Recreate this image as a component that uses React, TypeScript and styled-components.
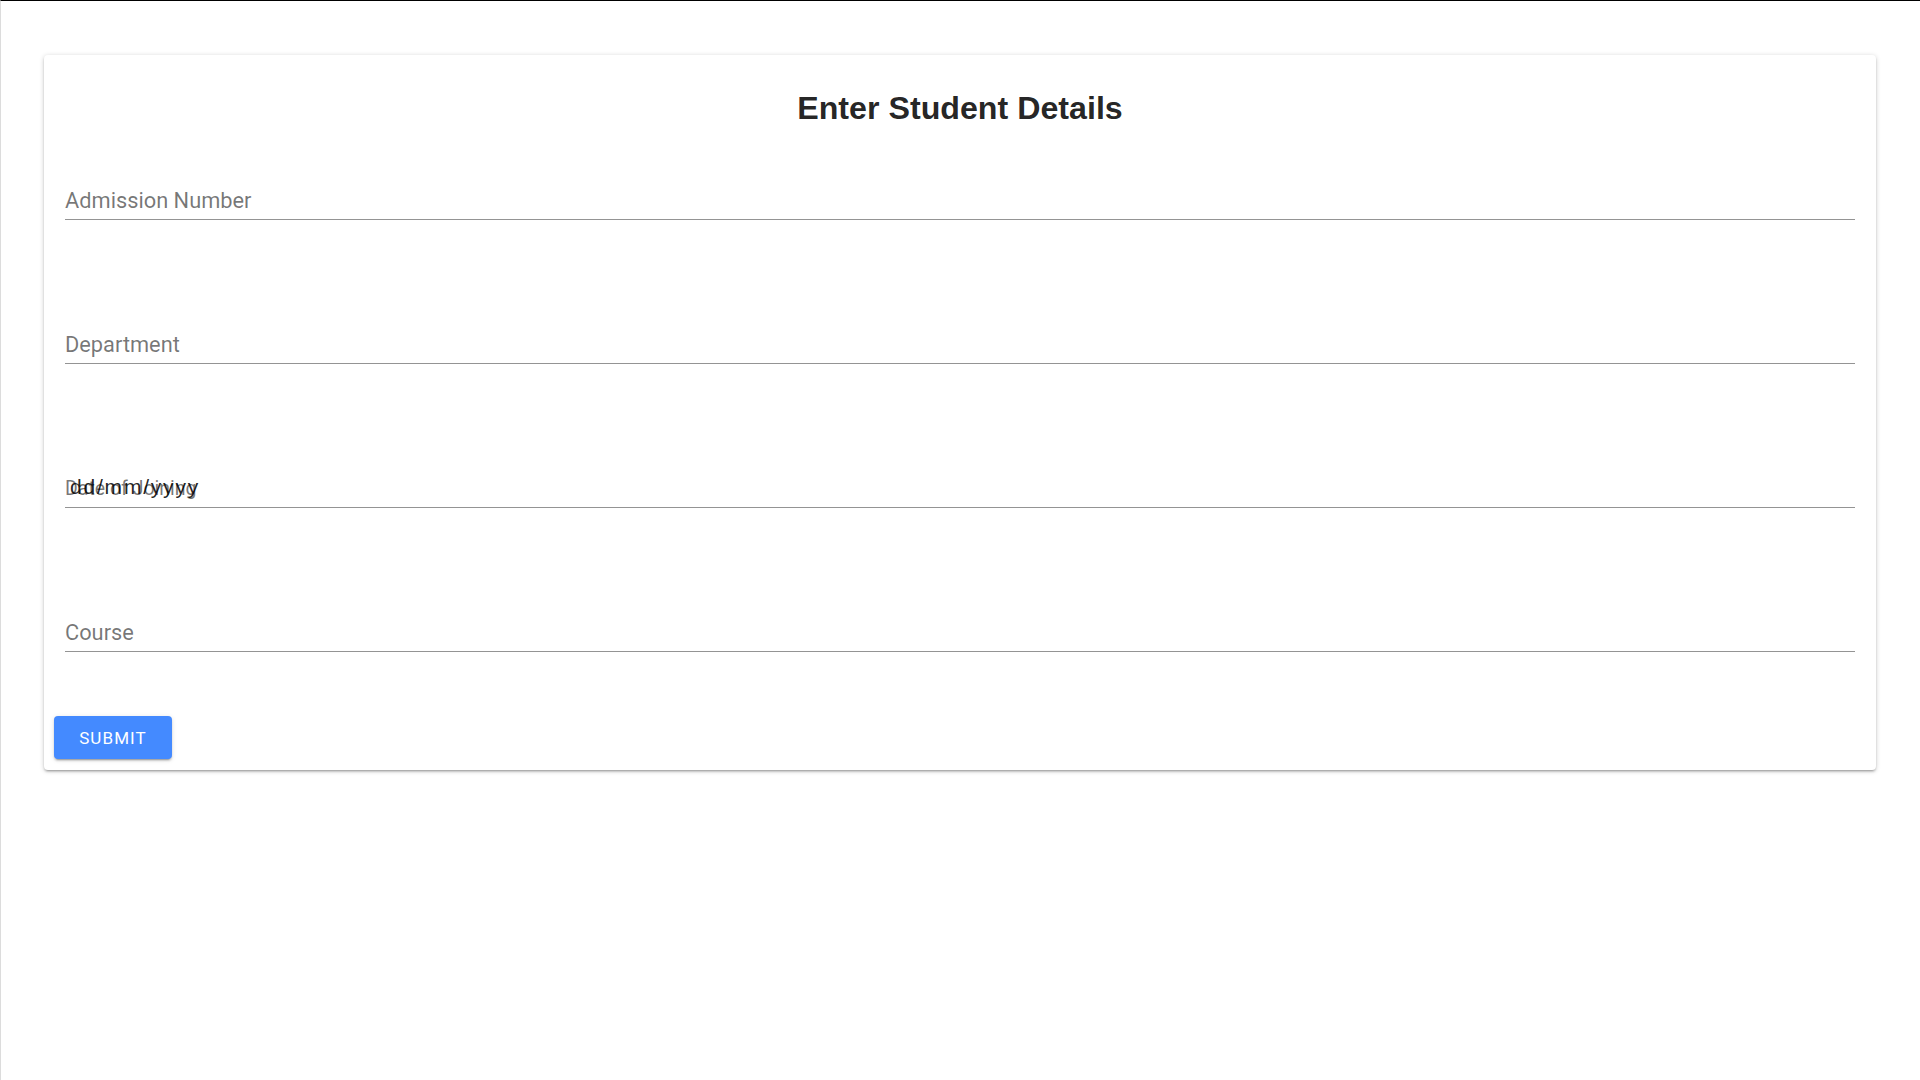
import React from "react";
import styled, { createGlobalStyle } from "styled-components";

const GlobalStyle = createGlobalStyle`
  html, body {
    margin: 0;
    padding: 0;
    background: #ffffff;
  }
  * { box-sizing: border-box; }
`;

const Page = styled.div`
  min-height: 100vh;
  border-top: 1px solid #000000;
  border-left: 1px solid #dcdcdc;
  padding: 54px 44px 40px 43px;
  background: #ffffff;
`;

const Card = styled.form`
  background: #ffffff;
  border-radius: 4px;
  box-shadow: 0 1px 5px rgba(0, 0, 0, 0.2), 0 2px 2px rgba(0, 0, 0, 0.14),
    0 3px 1px -2px rgba(0, 0, 0, 0.12);
  padding: 35px 10px 11px 10px;
  display: flex;
  flex-direction: column;
`;

const Title = styled.h1`
  margin: 0;
  font-family: "Liberation Sans", Arial, sans-serif;
  font-weight: 700;
  font-size: 32.2px;
  line-height: 37px;
  text-align: center;
  color: rgba(0, 0, 0, 0.87);
`;

const FieldList = styled.div`
  display: flex;
  flex-direction: column;
  gap: 96px;
  padding: 0 11px;
  margin-top: 45px;
`;

const Field = styled.label`
  position: relative;
  display: flex;
  align-items: flex-end;
  height: 48px;
  padding-bottom: 5px;
  border-bottom: 1px solid rgba(0, 0, 0, 0.42);
`;

const LabelText = styled.span<{ $small?: boolean }>`
  font-family: Roboto, "Liberation Sans", Arial, sans-serif;
  font-size: ${(p) => (p.$small ? "19.5px" : "21.8px")};
  line-height: 27px;
  color: rgba(0, 0, 0, 0.54);
  white-space: nowrap;
`;

const DateValue = styled.span`
  position: absolute;
  left: 5px;
  bottom: 7px;
  font-family: "Liberation Sans", Arial, sans-serif;
  font-size: 21px;
  line-height: 27px;
  letter-spacing: 1.8px;
  color: rgba(0, 0, 0, 0.87);
  white-space: nowrap;
`;

const Actions = styled.div`
  display: flex;
  margin-top: 64px;
`;

const SubmitButton = styled.button`
  height: 43px;
  padding: 0 24px;
  min-width: 118px;
  border: none;
  border-radius: 4px;
  background: #448aff;
  color: #ffffff;
  font-family: Roboto, "Liberation Sans", Arial, sans-serif;
  font-size: 17px;
  font-weight: 400;
  letter-spacing: 1.1px;
  text-transform: uppercase;
  cursor: pointer;
  box-shadow: 0 3px 1px -2px rgba(0, 0, 0, 0.2), 0 2px 2px rgba(0, 0, 0, 0.14),
    0 1px 5px rgba(0, 0, 0, 0.12);
`;

const fields = [
  { label: "Admission Number" },
  { label: "Department" },
  { label: "Date of Joining", date: true },
  { label: "Course" },
];

export default function App() {
  return (
    <>
      <GlobalStyle />
      <Page>
        <Card onSubmit={(e) => e.preventDefault()}>
          <Title>Enter Student Details</Title>
          <FieldList>
            {fields.map((f) => (
              <Field key={f.label}>
                <LabelText $small={f.date}>{f.label}</LabelText>
                {f.date && <DateValue>dd/mm/yyyy</DateValue>}
              </Field>
            ))}
          </FieldList>
          <Actions>
            <SubmitButton type="submit">Submit</SubmitButton>
          </Actions>
        </Card>
      </Page>
    </>
  );
}
